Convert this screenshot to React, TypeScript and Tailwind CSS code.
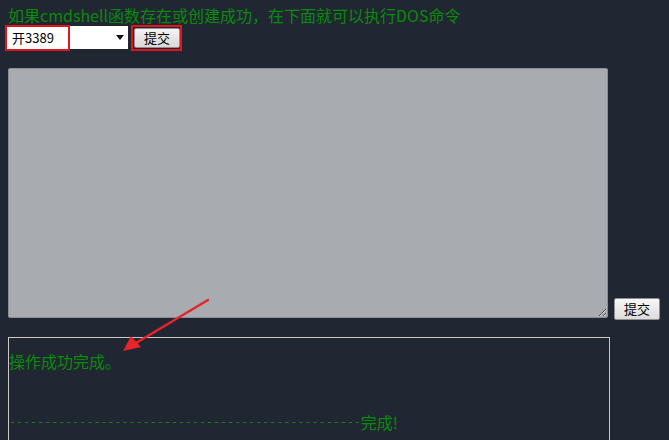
import { useState } from 'react'

const green = 'text-[#0a8a0a]'

const App = () => {
  const [cmd, setCmd] = useState('')

  return (
    <div className="relative w-[669px] h-[440px] overflow-hidden bg-[#202733] pl-[8px] pt-[5px] font-['Noto_Sans_CJK_SC','Liberation_Sans',sans-serif]">
      <div className={`text-[16px] leading-[20px] ${green}`}>
        如果cmdshell函数存在或创建成功，在下面就可以执行DOS命令
      </div>

      <div className="mt-[1px] flex items-center gap-[6px]">
        <div className="relative flex h-[23px] w-[121px] -ml-[1px] items-center justify-between bg-white pl-[5px] pr-[4px] text-[13px] text-black">
          <span>开3389</span>
          <svg width="8" height="5" viewBox="0 0 8 5">
            <path d="M0 0h8L4 5z" fill="#111" />
          </svg>
          {/* annotation */}
          <div className="pointer-events-none absolute -left-[2px] -top-[1px] h-[26px] w-[65px] border-2 border-[#e5141c]" />
        </div>
        <div className="relative flex">
          <button className="h-[20px] w-[46px] rounded-[2px] border border-[#8f8f8f] bg-gradient-to-b from-[#f4f4f4] to-[#d9d9d9] text-[13px] leading-[18px] text-black">
            提交
          </button>
          <div className="pointer-events-none absolute -left-[3px] -top-[3px] h-[26px] w-[51px] border-2 border-[#e5141c]" />
        </div>
      </div>

      <div className="mt-[19px] flex items-end gap-[6px]">
        <textarea
          value={cmd}
          onChange={e => setCmd(e.target.value)}
          className="h-[250px] w-[600px] rounded-[2px] border border-[#8b8f95] bg-[#a8abaf] outline-none"
        />
        <button className="mb-[-2px] h-[22px] w-[46px] rounded-[2px] border border-[#8f8f8f] bg-gradient-to-b from-[#f7f7f7] to-[#dcdcdc] text-[13px] leading-[20px] text-black">
          提交
        </button>
      </div>

      <div className="mt-[19px] h-[120px] w-[602px] border border-b-0 border-[#c9c9c9]">
        <div className={`mt-[13px] text-[16px] leading-[20px] ${green}`}>操作成功完成。</div>
        <div className={`mt-[41px] flex items-center ${green}`}>
          <span className="font-['DejaVu_Sans_Mono',monospace] text-[11.7px] leading-[20px]">
            {'-'.repeat(50)}
          </span>
          <span className="text-[16px] leading-[20px]">完成!</span>
        </div>
      </div>

      <svg className="pointer-events-none absolute left-0 top-0" width="669" height="440">
        <line x1="208" y1="300" x2="136" y2="343" stroke="#e8232a" strokeWidth="2.5" strokeLinecap="round" />
        <path d="M123 351 L131 336 L141 347 Z" fill="#e8232a" />
      </svg>
    </div>
  )
}

export default App
